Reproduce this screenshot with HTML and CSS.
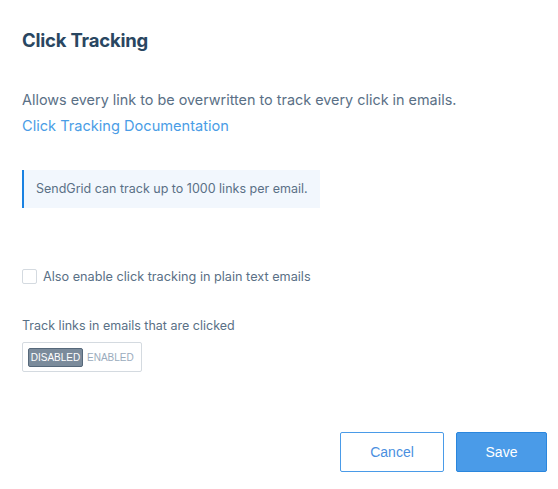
FILE: index.html
```html
<!DOCTYPE html>
<html lang="en">
<head>
    <meta charset="UTF-8">
    <title>Click Tracking</title>
    <link rel="stylesheet" href="styles.css">
</head>
<body>
    <div class="modal">
        <h2 class="title">Click Tracking</h2>
        <p class="desc">Allows every link to be overwritten to track every click in emails.<br>
            <a href="#" class="doc-link">Click Tracking Documentation</a></p>
        <div class="callout">SendGrid can track up to 1000 links per email.</div>
        <label class="check-row">
            <span class="checkbox"></span>
            <span>Also enable click tracking in plain text emails</span>
        </label>
        <div class="field-label">Track links in emails that are clicked</div>
        <div class="toggle">
            <span class="opt active">DISABLED</span>
            <span class="opt">ENABLED</span>
        </div>
        <div class="actions">
            <button class="btn btn-secondary">Cancel</button>
            <button class="btn btn-primary">Save</button>
        </div>
    </div>
</body>
</html>
```

FILE: styles.css
```css
*{
    margin: 0;
    padding: 0;
    box-sizing: border-box;
}
body{
    background: #fff;
    font-family: Inter, "Noto Sans", sans-serif;
    color: #5a7086;
}
.modal{
    width: 558px;
    padding: 29px 11px 0 22px;
}
.title{
    font-size: 18.5px;
    line-height: 22px;
    font-weight: 700;
    color: #294661;
    letter-spacing: -0.2px;
}
.desc{
    margin-top: 36px;
    font-size: 14.4px;
    line-height: 26px;
}
.doc-link{
    font-size: 14.6px;
    color: #4a9de6;
    text-decoration: none;
}
.callout{
    margin-top: 31px;
    width: 298px;
    height: 38px;
    line-height: 38px;
    padding-left: 12px;
    border-left: 2px solid #1a82e2;
    background: #f2f7fd;
    font-size: 12.5px;
}
.check-row{
    display: flex;
    align-items: center;
    gap: 6px;
    margin-top: 59px;
    font-size: 12.7px;
    line-height: 19px;
}
.checkbox{
    width: 15px;
    height: 15px;
    border: 1px solid #d4dae0;
    border-radius: 2px;
    background: #fff;
}
.field-label{
    margin-top: 31px;
    font-size: 12.5px;
    line-height: 18px;
}
.toggle{
    display: flex;
    align-items: center;
    gap: 4px;
    margin-top: 7px;
    width: 120px;
    height: 30px;
    padding: 0 5px;
    border: 1px solid #d4dae0;
    border-radius: 2px;
    font-family: "Liberation Sans", Arial, sans-serif;
    font-size: 10px;
}
.opt{
    color: #9aabbc;
}
.opt.active{
    width: 55px;
    height: 19px;
    line-height: 17px;
    text-align: center;
    background: #7b8b9b;
    border: 1px solid #56687a;
    border-radius: 2px;
    color: #fff;
}
.actions{
    display: flex;
    justify-content: flex-end;
    gap: 12px;
    margin-top: 60px;
}
.btn{
    height: 40px;
    border-radius: 2px;
    font-family: "Liberation Sans", Arial, sans-serif;
    font-size: 14px;
    cursor: pointer;
}
.btn-secondary{
    width: 104px;
    background: #fff;
    border: 1px solid #4a9be8;
    color: #4a8fe0;
}
.btn-primary{
    width: 91px;
    background: #4a9be8;
    border: 1px solid #2a86dd;
    color: #fff;
}
```
